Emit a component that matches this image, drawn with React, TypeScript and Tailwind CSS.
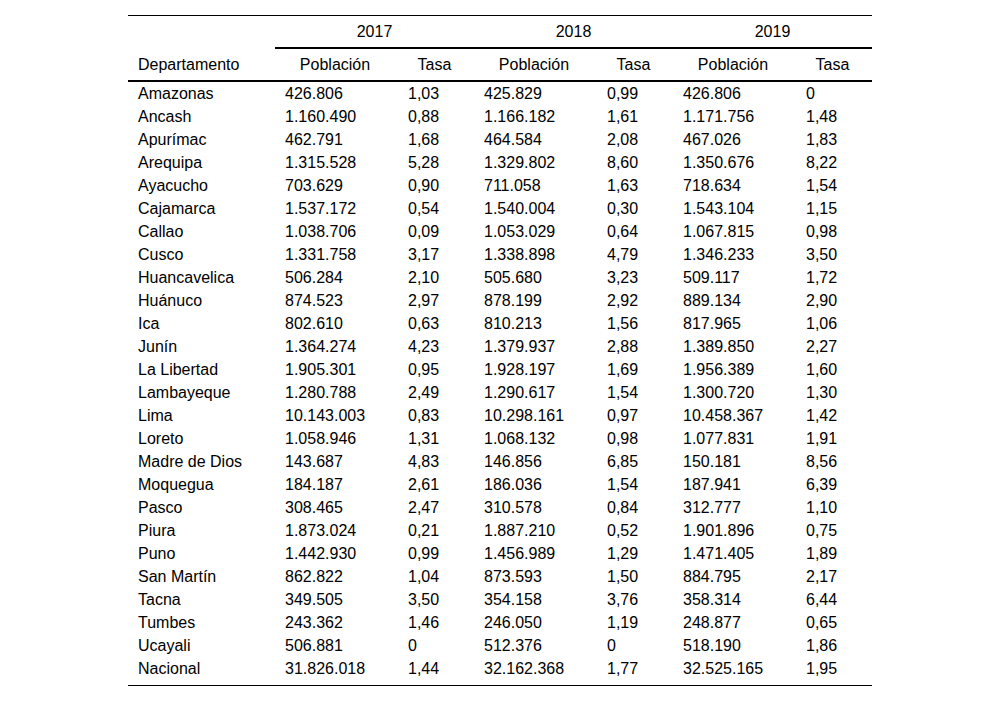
import React from 'react';

// Población y tasa por departamento, 2017-2019
type Row = [string, string, string, string, string, string, string];

const rows: Row[] = [
  ['Amazonas', '426.806', '1,03', '425.829', '0,99', '426.806', '0'],
  ['Ancash', '1.160.490', '0,88', '1.166.182', '1,61', '1.171.756', '1,48'],
  ['Apurímac', '462.791', '1,68', '464.584', '2,08', '467.026', '1,83'],
  ['Arequipa', '1.315.528', '5,28', '1.329.802', '8,60', '1.350.676', '8,22'],
  ['Ayacucho', '703.629', '0,90', '711.058', '1,63', '718.634', '1,54'],
  ['Cajamarca', '1.537.172', '0,54', '1.540.004', '0,30', '1.543.104', '1,15'],
  ['Callao', '1.038.706', '0,09', '1.053.029', '0,64', '1.067.815', '0,98'],
  ['Cusco', '1.331.758', '3,17', '1.338.898', '4,79', '1.346.233', '3,50'],
  ['Huancavelica', '506.284', '2,10', '505.680', '3,23', '509.117', '1,72'],
  ['Huánuco', '874.523', '2,97', '878.199', '2,92', '889.134', '2,90'],
  ['Ica', '802.610', '0,63', '810.213', '1,56', '817.965', '1,06'],
  ['Junín', '1.364.274', '4,23', '1.379.937', '2,88', '1.389.850', '2,27'],
  ['La Libertad', '1.905.301', '0,95', '1.928.197', '1,69', '1.956.389', '1,60'],
  ['Lambayeque', '1.280.788', '2,49', '1.290.617', '1,54', '1.300.720', '1,30'],
  ['Lima', '10.143.003', '0,83', '10.298.161', '0,97', '10.458.367', '1,42'],
  ['Loreto', '1.058.946', '1,31', '1.068.132', '0,98', '1.077.831', '1,91'],
  ['Madre de Dios', '143.687', '4,83', '146.856', '6,85', '150.181', '8,56'],
  ['Moquegua', '184.187', '2,61', '186.036', '1,54', '187.941', '6,39'],
  ['Pasco', '308.465', '2,47', '310.578', '0,84', '312.777', '1,10'],
  ['Piura', '1.873.024', '0,21', '1.887.210', '0,52', '1.901.896', '0,75'],
  ['Puno', '1.442.930', '0,99', '1.456.989', '1,29', '1.471.405', '1,89'],
  ['San Martín', '862.822', '1,04', '873.593', '1,50', '884.795', '2,17'],
  ['Tacna', '349.505', '3,50', '354.158', '3,76', '358.314', '6,44'],
  ['Tumbes', '243.362', '1,46', '246.050', '1,19', '248.877', '0,65'],
  ['Ucayali', '506.881', '0', '512.376', '0', '518.190', '1,86'],
  ['Nacional', '31.826.018', '1,44', '32.162.368', '1,77', '32.525.165', '1,95'],
];

const years = ['2017', '2018', '2019'];

const grid = 'grid grid-cols-[147px_120px_79px_120px_79px_120px_79px]';

export default function App() {
  return (
    <div
      className="min-h-[701px] w-[1000px] bg-white pt-[15px] text-[16px] text-black"
      style={{ fontFamily: '"Liberation Sans", Arial, sans-serif' }}
    >
      <div className="ml-[128px] w-[744px] border-t border-black border-b pb-[5px]">
        {/* Fila de años */}
        <div className={grid}>
          <div className="h-[33px]" />
          {years.map((y) => (
            <div
              key={y}
              className="col-span-2 flex h-[33px] items-center justify-center border-b-2 border-black"
            >
              {y}
            </div>
          ))}
        </div>

        {/* Encabezados */}
        <div className={`${grid} h-[33px] items-center border-b-2 border-black`}>
          <div className="pl-[10px]">Departamento</div>
          {years.map((y) => (
            <React.Fragment key={y}>
              <div className="text-center">Población</div>
              <div className="text-center">Tasa</div>
            </React.Fragment>
          ))}
        </div>

        {/* Datos */}
        {rows.map((r) => (
          <div key={r[0]} className={`${grid} h-[23px] leading-[23px]`}>
            <div className="pl-[10px]">{r[0]}</div>
            <div className="pl-[10px]">{r[1]}</div>
            <div className="pl-[13px]">{r[2]}</div>
            <div className="pl-[10px]">{r[3]}</div>
            <div className="pl-[13px]">{r[4]}</div>
            <div className="pl-[10px]">{r[5]}</div>
            <div className="pl-[13px]">{r[6]}</div>
          </div>
        ))}
      </div>
    </div>
  );
}
